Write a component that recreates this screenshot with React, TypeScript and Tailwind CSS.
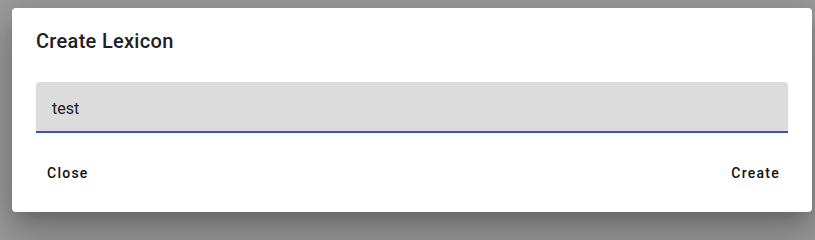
export default function App() {
  return (
    <div className="h-screen min-h-[216px] w-[815px] overflow-hidden bg-[#9b9b9b] pt-[8px] pl-[12px]" style={{ fontFamily: 'Roboto, sans-serif' }}>
      <div className="flex h-[204px] w-[800px] flex-col rounded-[4px] bg-white shadow-[0_11px_15px_-7px_rgba(0,0,0,0.2),0_24px_38px_3px_rgba(0,0,0,0.14),0_9px_46px_8px_rgba(0,0,0,0.12)]">
        <h2 className="px-6 pt-[17px] pb-4 text-[20px] leading-8 font-medium tracking-[0.3px] text-[#212121]">Create Lexicon</h2>
        <div className="px-6 pt-[9px]">
          <div className="h-[51px] rounded-t-[4px] border-b-2 border-[#3f51b5] bg-[#dcdcdc] px-4 pt-[15px]">
            <span className="text-[16px] leading-5 text-[#212121]">test</span>
          </div>
        </div>
        <div className="mt-auto flex items-center justify-between pr-[21px] pb-[21px] pl-6">
          <button className="h-9 px-[11px] text-[14px] font-medium tracking-[1.25px] text-[#111]">Close</button>
          <button className="h-9 px-[11px] text-[14px] font-medium tracking-[1.25px] text-[#111]">Create</button>
        </div>
      </div>
    </div>
  );
}
